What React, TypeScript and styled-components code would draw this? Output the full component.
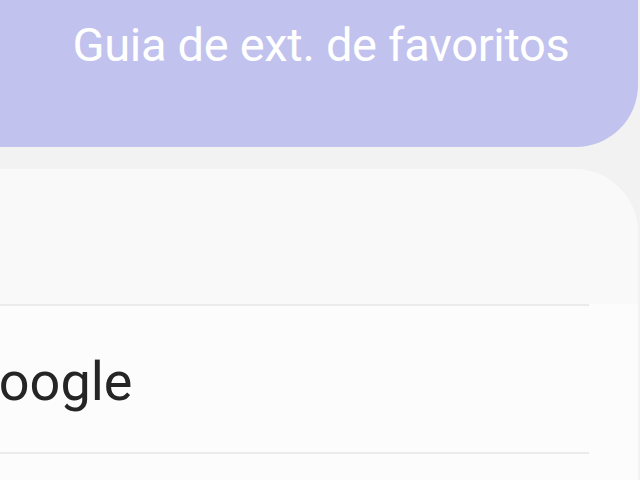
import React from 'react'
import styled, { createGlobalStyle } from 'styled-components'

const GlobalStyle = createGlobalStyle`
  html, body {
    margin: 0;
    padding: 0;
    background: #f2f2f2;
    overflow: hidden;
  }
  body {
    font-family: Roboto, "Noto Sans", "Liberation Sans", sans-serif;
  }
`

const Screen = styled.div`
  width: 640px;
  height: 480px;
  overflow: hidden;
  background: #f2f2f2;
  display: flex;
  flex-direction: column;
  gap: 22px;
`

const AppBar = styled.header`
  width: 638px;
  height: 147px;
  flex-shrink: 0;
  background: #c1c3ee;
  border-bottom-right-radius: 62px;
  display: flex;
  justify-content: center;
  padding-top: 19px;
  padding-left: 4px;
  box-sizing: border-box;
`

const Title = styled.h1`
  margin: 0;
  color: #ffffff;
  font-family: Roboto, "Noto Sans", sans-serif;
  font-weight: 400;
  font-size: 47px;
  line-height: 52px;
  letter-spacing: -0.3px;
  white-space: nowrap;
`

const Card = styled.section`
  margin-left: -80px;
  width: 718px;
  flex: 1;
  background: #fcfcfc;
  border-top-right-radius: 64px;
  overflow: hidden;
  display: flex;
  flex-direction: column;
`

const CardTop = styled.div`
  height: 135px;
  flex-shrink: 0;
  background: #f9f9f9;
`

const Row = styled.div<{ $height: number }>`
  height: ${p => p.$height}px;
  margin-right: 49px;
  border-top: 2px solid #ebebeb;
  display: flex;
  align-items: center;
  padding-left: 42px;
  padding-top: 4px;
  box-sizing: border-box;
  flex-shrink: 0;
`

const RowLabel = styled.span`
  color: #252525;
  font-family: Roboto, "Noto Sans", sans-serif;
  font-size: 54px;
  font-weight: 400;
`

export default function App() {
  return (
    <>
      <GlobalStyle />
      <Screen>
        <AppBar>
          <Title>Guia de ext. de favoritos</Title>
        </AppBar>
        <Card>
          <CardTop />
          <Row $height={148}>
            <RowLabel>Google</RowLabel>
          </Row>
          <Row $height={148} />
        </Card>
      </Screen>
    </>
  )
}
